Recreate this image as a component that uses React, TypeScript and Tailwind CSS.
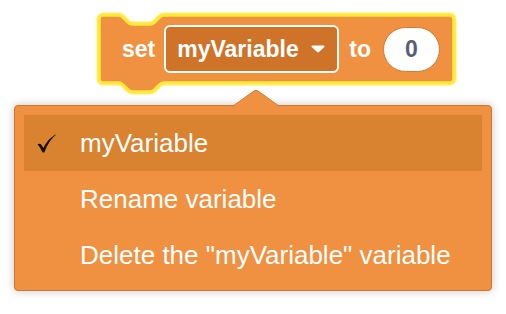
export default function App() {
  const blockPath =
    "M2 6 a4 4 0 0 1 4 -4 H22 c2 0 3 1 4.5 2.5 L31 9 c1.5 1.5 2.5 2 4.5 2 H53 c2 0 3 -0.5 4.5 -2 L62 4.5 c1.5 -1.5 2.5 -2.5 4.5 -2.5 H353 a4 4 0 0 1 4 4 V66 a4 4 0 0 1 -4 4 H66.5 c-2 0 -3 1 -4.5 2.5 L57.5 77 c-1.5 1.5 -2.5 2 -4.5 2 H35.5 c-2 0 -3 -0.5 -4.5 -2 L26.5 72.5 c-1.5 -1.5 -2.5 -2.5 -4.5 -2.5 H6 a4 4 0 0 1 -4 -4 Z";

  return (
    <div className="relative w-[506px] h-[314px] overflow-hidden bg-white font-['Liberation_Sans',Arial,sans-serif]">
      {/* set block */}
      <div className="relative ml-[97px] mt-[13px] flex h-[72px] w-[359px] items-center pl-[25px]">
        <svg className="absolute left-0 top-0 overflow-visible" width="359" height="72" viewBox="0 0 359 72">
          <path d={blockPath} fill="#EF9140" stroke="#FFF59A" strokeWidth="5.5" strokeLinejoin="round" />
          <path d={blockPath} fill="#EF9140" stroke="#FFE93A" strokeWidth="3.5" strokeLinejoin="round" />
        </svg>
        <span className="relative text-[23px] font-bold text-white">set</span>
        <div className="relative ml-[9px] flex h-[48px] w-[175px] items-center rounded-[6px] border-2 border-white bg-[#CF7329] pl-[11px]">
          <span className="text-[23px] font-bold text-white">myVariable</span>
          <svg className="ml-[12px]" width="14" height="8" viewBox="0 0 14 8">
            <path d="M1.5 0.5 H12.5 c1 0 1.4 1 0.8 1.6 L8 7 c-0.6 0.6 -1.4 0.6 -2 0 L0.7 2.1 C0.1 1.5 0.5 0.5 1.5 0.5 Z" fill="white" />
          </svg>
        </div>
        <span className="relative ml-[10px] text-[23px] font-bold text-white">to</span>
        <div className="relative ml-[12px] flex h-[45px] w-[57px] items-center justify-center rounded-full border border-[#D9782E] bg-white">
          <span className="text-[23px] font-bold text-[#575E75]">0</span>
        </div>
      </div>

      {/* dropdown menu */}
      <div className="relative ml-[14px] mt-[20px] h-[186px] w-[478px] rounded-[4px] border border-[#D2752A] bg-[#EF9140] p-[9px] shadow-[0_0_10px_rgba(0,0,0,0.22)]">
        <svg className="absolute left-[218px] top-[-16px]" width="46" height="17" viewBox="0 0 46 17">
          <path d="M0 16.5 L21 1 Q23 -0.3 25 1 L46 16.5 Z" fill="#EF9140" />
          <path d="M0 16 L21 1 Q23 -0.3 25 1 L46 16" fill="none" stroke="#D2752A" strokeWidth="1" />
          <rect x="0" y="16" width="46" height="1" fill="#EF9140" />
        </svg>
        <div className="flex h-[56px] items-center bg-[#D9822F] text-[26px] text-white">
          <div className="w-[56px] pl-[13px]">
            <svg width="20" height="19" viewBox="0 0 20 19">
              <path
                d="M0.5 10.5 C2 9.5 3.5 9.5 4.5 11 L6.3 14 C9.5 8 13.5 3 19.5 0.3 C14.5 4 10.5 10 7.5 18 C7 18.8 6 18.8 5.4 18 L3.2 14 C2.4 12.6 1.5 11.5 0.5 10.5 Z"
                fill="#111"
              />
            </svg>
          </div>
          <span>myVariable</span>
        </div>
        <div className="flex h-[56px] items-center pl-[56px] text-[26px] text-white">Rename variable</div>
        <div className="flex h-[56px] items-center pl-[56px] text-[26px] text-white">Delete the "myVariable" variable</div>
      </div>
    </div>
  );
}
